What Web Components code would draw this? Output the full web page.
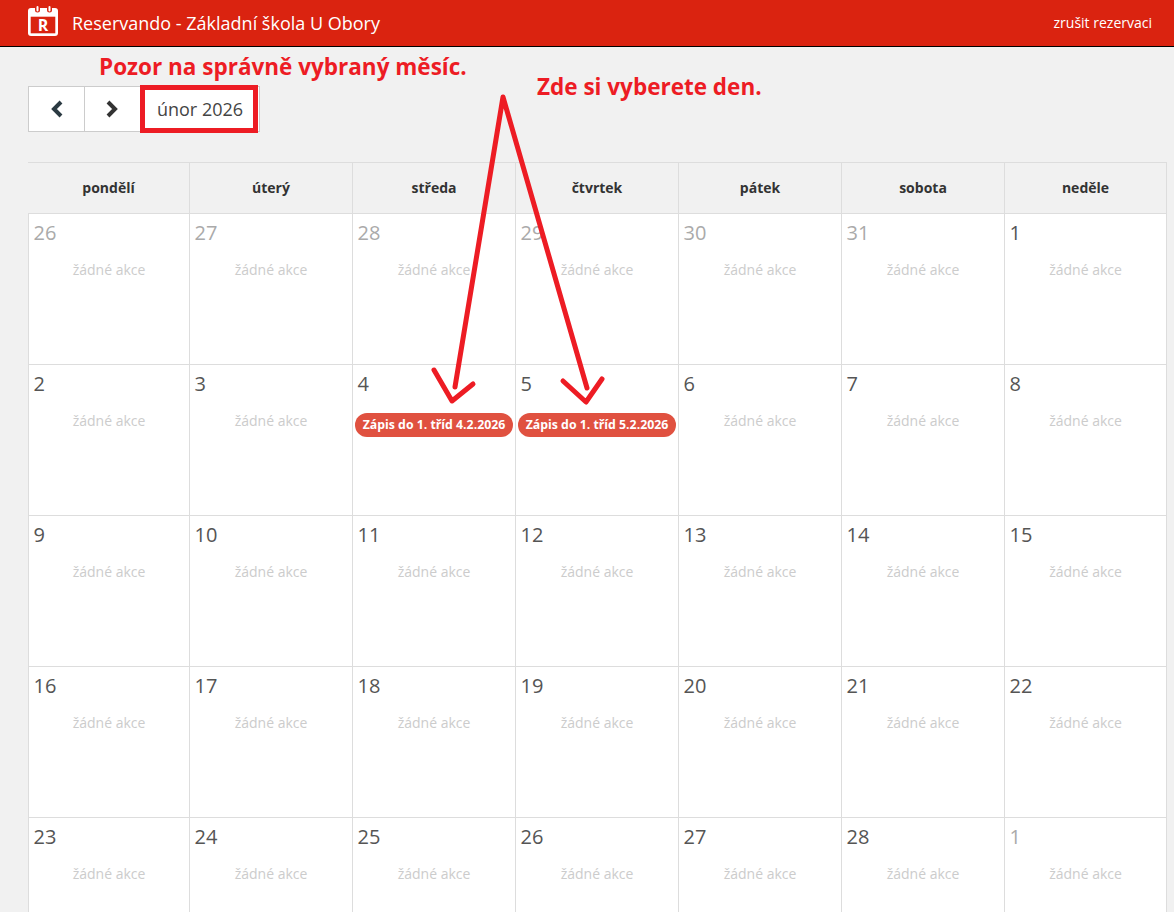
<!DOCTYPE html>
<html lang="cs">
<head>
<meta charset="utf-8">
<title>Reservando</title>
<style>
    html, body { margin: 0; height: 912px; overflow: hidden; background: #f1f1f1; font-family: "Open Sans", sans-serif; }
</style>
</head>
<body>
<app-header title-text="Reservando - Základní škola U Obory" action="zrušit rezervaci"></app-header>
<cal-page month="únor 2026"></cal-page>
<note-overlay></note-overlay>

<script>
class AppHeader extends HTMLElement {
    constructor() {
        super();
        this.attachShadow({ mode: "open" });
    }

    connectedCallback() {
        this.shadowRoot.innerHTML = `
            <style>
                :host { display: flex; align-items: center; justify-content: space-between; height: 46px; padding: 0 22px 0 28px; background: #da2310; border-bottom: 1px solid #000; color: #fff; }
                .brand { display: flex; align-items: center; gap: 14px; font-size: 18px; }
                svg { display: block; width: 30px; height: 30px; margin-top: -4px; }
                .action { font-size: 14px; margin-top: -2px; }
            </style>
            <div class="brand">
                <svg viewBox="0 0 30 30">
                    <rect x="0" y="2" width="30" height="28" rx="3" fill="#fff"/>
                    <rect x="2.7" y="10.7" width="24.6" height="16.6" fill="#da2310"/>
                    <rect x="7" y="0" width="5" height="6.5" rx="2.5" fill="#da2310"/>
                    <rect x="19" y="0" width="5" height="6.5" rx="2.5" fill="#da2310"/>
                    <rect x="8.5" y="0" width="2" height="5.5" rx="1" fill="#fff"/>
                    <rect x="20.5" y="0" width="2" height="5.5" rx="1" fill="#fff"/>
                    <text x="15" y="24.8" text-anchor="middle" font-family="Open Sans" font-weight="700" font-size="16" fill="#fff">R</text>
                </svg>
                <span>${this.getAttribute("title-text")}</span>
            </div>
            <span class="action">${this.getAttribute("action")}</span>
        `;
    }
}

class CalToolbar extends HTMLElement {
    constructor() {
        super();
        this.attachShadow({ mode: "open" });
    }

    connectedCallback() {
        this.shadowRoot.innerHTML = `
            <style>
                :host { display: flex; width: max-content; height: 46px; background: #fff; box-sizing: border-box; border: 1px solid #ccc; color: #333; }
                button { width: 56px; padding: 0; border: none; border-right: 1px solid #ccc; background: #fff; display: flex; align-items: center; justify-content: center; }
                svg { width: 14px; height: 18px; }
                .month { position: relative; width: 118px; display: flex; align-items: center; justify-content: center; font-size: 18px; color: #444; }
                .month::after { content: ""; position: absolute; left: -1px; top: -2px; right: 1px; bottom: -2px; border: 5px solid #ed1c24; }
            </style>
            <button><svg viewBox="0 0 14 18"><path d="M11 2 L4 9 L11 16" fill="none" stroke="#2b3a42" stroke-width="4"/></svg></button>
            <button><svg viewBox="0 0 14 18"><path d="M2 2 L9 9 L2 16" fill="none" stroke="#333" stroke-width="4"/></svg></button>
            <div class="month">${this.getAttribute("month")}</div>
        `;
    }
}

class CalEvent extends HTMLElement {
    constructor() {
        super();
        this.attachShadow({ mode: "open" });
        this.shadowRoot.innerHTML = `
            <style>
                :host { display: block; height: 24px; line-height: 23px; margin: 0 2px; border-radius: 12px; background: #e05140; color: #fff; font-size: 12.3px; font-weight: 700; text-align: center; white-space: nowrap; }
            </style>
            <slot></slot>
        `;
    }
}

class CalDay extends HTMLElement {
    constructor() {
        super();
        this.attachShadow({ mode: "open" });
        this.shadowRoot.innerHTML = `
            <style>
                :host { display: block; height: 151px; box-sizing: border-box; border-right: 1px solid #ddd; border-bottom: 1px solid #ddd; background: #fff; }
                .num { height: 38px; padding: 5px 0 0 4.5px; box-sizing: border-box; font-size: 20px; line-height: 28px; color: #555; }
                :host([muted]) .num { color: #aaa; }
                .none { margin-top: 6px; font-size: 14px; line-height: 24px; text-align: center; color: #ccc; }
                .events { margin-top: 10px; }
            </style>
            <div class="num"></div>
            <div class="none">žádné akce</div>
            <div class="events"><slot></slot></div>
        `;
    }

    connectedCallback() {
        this.shadowRoot.querySelector(".num").textContent = this.getAttribute("day");
        const hasEvents = this.children.length > 0;
        this.shadowRoot.querySelector(".none").style.display = hasEvents ? "none" : "block";
    }
}

class CalGrid extends HTMLElement {
    constructor() {
        super();
        this.attachShadow({ mode: "open" });
        const names = ["pondělí", "úterý", "středa", "čtvrtek", "pátek", "sobota", "neděle"];
        const days = [
            "-26", "-27", "-28", "-29", "-30", "-31", "1",
            "2", "3", "4", "5", "6", "7", "8",
            "9", "10", "11", "12", "13", "14", "15",
            "16", "17", "18", "19", "20", "21", "22",
            "23", "24", "25", "26", "27", "28", "-1"
        ];
        const events = { "4": "Zápis do 1. tříd 4.2.2026", "5": "Zápis do 1. tříd 5.2.2026" };
        this.shadowRoot.innerHTML = `
            <style>
                :host { display: grid; grid-template-columns: 162px repeat(5, 163px) 162px; grid-auto-rows: min-content; width: max-content; border-top: 1px solid #ddd; }
                .head { height: 51px; box-sizing: border-box; display: flex; align-items: center; justify-content: center; border-right: 1px solid #ddd; border-bottom: 1px solid #ddd; font-size: 14px; font-weight: 700; color: #333; padding-bottom: 2px; }
                .head:first-child { border-left: 1px solid #ddd; }
                cal-day:nth-of-type(7n+1) { border-left: 1px solid #ddd; }
            </style>
            ${names.map((name) => `<div class="head">${name}</div>`).join("")}
            ${days.map((d) => {
                const muted = d.startsWith("-");
                const day = d.replace("-", "");
                const event = events[d] ? `<cal-event>${events[d]}</cal-event>` : "";
                return `<cal-day day="${day}" ${muted ? "muted" : ""}>${event}</cal-day>`;
            }).join("")}
        `;
    }
}

class CalPage extends HTMLElement {
    constructor() {
        super();
        this.attachShadow({ mode: "open" });
    }

    connectedCallback() {
        this.shadowRoot.innerHTML = `
            <style>
                :host { display: block; padding: 39px 0 0 28px; }
                cal-toolbar { margin-bottom: 30px; }
            </style>
            <cal-toolbar month="${this.getAttribute("month")}"></cal-toolbar>
            <cal-grid></cal-grid>
        `;
    }
}

// cervene poznamky pres screenshot
class NoteOverlay extends HTMLElement {
    constructor() {
        super();
        this.attachShadow({ mode: "open" });
        this.shadowRoot.innerHTML = `
            <style>
                :host { position: absolute; left: 0; top: 0; width: 1174px; height: 912px; pointer-events: none; color: #ed1c24; font-weight: 700; font-size: 22.5px; line-height: 30px; }
                span { position: absolute; white-space: nowrap; }
                svg { position: absolute; left: 0; top: 0; }
                path { fill: none; stroke: #ed1c24; stroke-width: 5; stroke-linecap: round; stroke-linejoin: round; }
            </style>
            <span style="left: 99px; top: 52px;">Pozor na správně vybraný měsíc.</span>
            <span style="left: 537px; top: 72px;">Zde si vyberete den.</span>
            <svg width="1174" height="912">
                <path d="M455 387 L503 97 L587 388"/>
                <path d="M434 370 L452 401 L473 384"/>
                <path d="M563 381 L586 402 L602 379"/>
            </svg>
        `;
    }
}

customElements.define("app-header", AppHeader);
customElements.define("cal-toolbar", CalToolbar);
customElements.define("cal-event", CalEvent);
customElements.define("cal-day", CalDay);
customElements.define("cal-grid", CalGrid);
customElements.define("cal-page", CalPage);
customElements.define("note-overlay", NoteOverlay);
</script>
</body>
</html>
